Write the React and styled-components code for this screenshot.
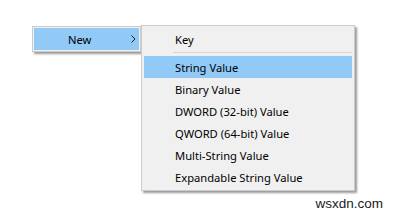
import styled, { createGlobalStyle } from "styled-components";

const GlobalStyle = createGlobalStyle`
  html, body {
    margin: 0;
    padding: 0;
    background: #ffffff;
  }
  body {
    font-family: "Noto Sans", "Open Sans", sans-serif;
  }
`;

const Page = styled.div`
  width: 395px;
  height: 213px;
  display: flex;
  flex-direction: column;
  overflow: hidden;
  background: #ffffff;
`;

const MenuRow = styled.div`
  display: flex;
  align-items: flex-start;
  padding: 25px 0 0 32px;
`;

const MenuBox = styled.div`
  background: #f0f0f0;
  border: 1px solid #cccccc;
  padding: ${(p) => p.$pad || "1px"};
  box-shadow: 2px 2px 2px rgba(0, 0, 0, 0.4);
  margin-top: ${(p) => p.$top || "0"};
  width: ${(p) => p.$width};
  box-sizing: border-box;
`;

const Item = styled.div`
  height: 22px;
  display: flex;
  align-items: center;
  padding-left: ${(p) => p.$indent || "31px"};
  padding-right: 3px;
  font-size: 11.2px;
  color: #000000;
  background: ${(p) => (p.$active ? "#91c9f7" : "transparent")};
  white-space: nowrap;
`;

const Label = styled.span`
  flex: 1;
`;

const Separator = styled.div`
  height: 1px;
  margin: 2px 0 3px 29px;
  background: #d7d7d7;
`;

const Footer = styled.div`
  display: flex;
  justify-content: flex-end;
  padding: 5px 12px 0 0;
  font-family: "Liberation Sans", Arial, sans-serif;
  font-size: 13.5px;
  color: #1a1a1a;
`;

function Chevron() {
  return (
    <svg width="5" height="8" viewBox="0 0 5 8">
      <polyline
        points="0.5,0.5 4,4 0.5,7.5"
        fill="none"
        stroke="#1a1a1a"
        strokeWidth="1"
      />
    </svg>
  );
}

const entries = [
  "String Value",
  "Binary Value",
  "DWORD (32-bit) Value",
  "QWORD (64-bit) Value",
  "Multi-String Value",
  "Expandable String Value",
];

export default function App() {
  return (
    <>
      <GlobalStyle />
      <Page>
        <MenuRow>
          <MenuBox $top="1px" $width="109px">
            <Item $active $indent="34px">
              <Label>New</Label>
              <Chevron />
            </Item>
          </MenuBox>
          <MenuBox $pad="2px" $width="214px">
            <Item>
              <Label>Key</Label>
            </Item>
            <Separator />
            {entries.map((entry, i) => (
              <Item key={entry} $active={i === 0}>
                <Label>{entry}</Label>
              </Item>
            ))}
          </MenuBox>
        </MenuRow>
        <Footer>wsxdn.com</Footer>
      </Page>
    </>
  );
}
